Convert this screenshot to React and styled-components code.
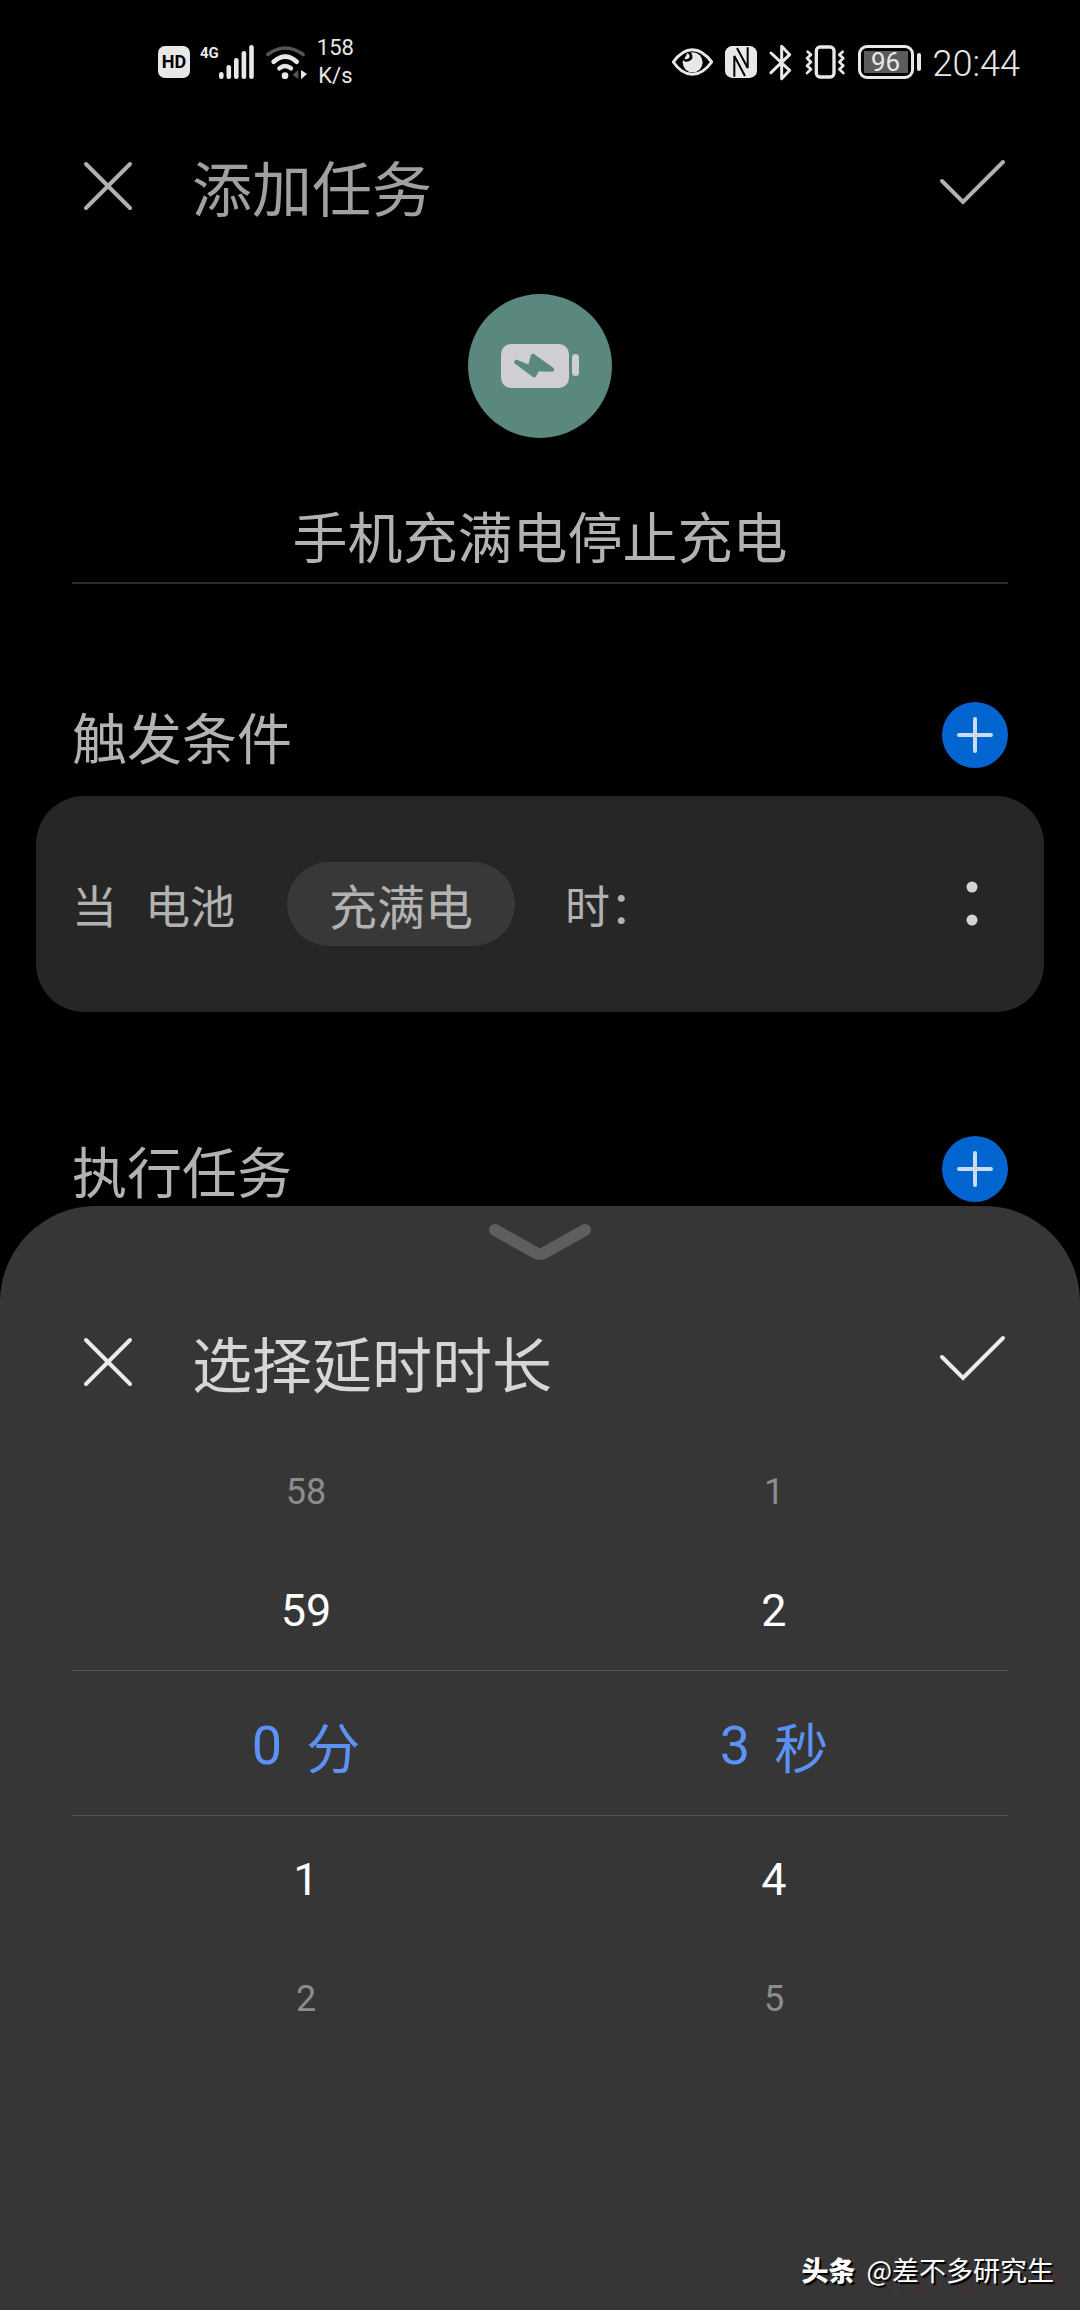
import React, { useState } from "react";
import styled, { createGlobalStyle } from "styled-components";

const GlobalStyle = createGlobalStyle`
  * {
    box-sizing: border-box;
  }

  body {
    margin: 0;
    background-color: #000;
    font-family: Roboto, "Noto Sans CJK SC", sans-serif;
    font-weight: 400;
  }

  button,
  input {
    font: inherit;
    color: inherit;
    border: none;
    background: none;
    padding: 0;
    margin: 0;
  }

  h1,
  h2 {
    margin: 0;
    font-family: "Noto Sans CJK SC", sans-serif;
    font-weight: inherit;
  }
`;

const Page = styled.div`
  min-height: 100vh;
  display: flex;
  flex-direction: column;
  color: #b2b2b2;
`;

/* status bar */

const StatusBar = styled.div`
  height: 124px;
  padding: 0 60px 0 158px;
  display: flex;
  align-items: center;
  justify-content: space-between;
  color: #e8e8e8;
`;

const StatusGroup = styled.div`
  display: flex;
  align-items: center;
  gap: ${({ $gap }) => $gap}px;
`;

const HdBadge = styled.span`
  width: 32px;
  height: 32px;
  border-radius: 7px;
  background-color: #e8e8e8;
  color: #000;
  font-size: 18px;
  font-weight: 700;
  line-height: 32px;
  text-align: center;
`;

const Signal = styled.div`
  display: flex;
  height: 34px;

  span {
    font-size: 15px;
    font-weight: 700;
    line-height: 16px;
  }
`;

const Speed = styled.div`
  font-size: 22px;
  line-height: 28px;
  text-align: center;
`;

const Battery = styled.div`
  display: flex;
  align-items: center;
  gap: 3px;

  &::after {
    content: "";
    width: 4px;
    height: 18px;
    border-radius: 2px;
    background-color: #e8e8e8;
  }
`;

const BatteryBody = styled.div`
  width: 56px;
  height: 34px;
  padding: 3px;
  border: 3px solid #e8e8e8;
  border-radius: 9px;

  span {
    display: block;
    height: 22px;
    background-color: #5c5c5c;
    font-size: 26px;
    line-height: 22px;
    text-align: center;
  }
`;

const Clock = styled.span`
  padding-top: 4px;
  font-size: 36px;
  font-weight: 300;
  line-height: 40px;
`;

/* shared parts */

const TitleBar = styled.header`
  height: 124px;
  padding: 0 72px;
  display: flex;
  align-items: center;
  gap: 48px;
  color: ${({ $bright }) => ($bright ? "#d6d6d6" : "#a0a0a0")};

  h1,
  h2 {
    flex: 1;
    font-size: 60px;
    line-height: 76px;
  }
`;

const IconButton = styled.button`
  width: 72px;
  height: 72px;
  color: ${({ $bright }) => ($bright ? "#ececec" : "#b0b0b0")};
  cursor: pointer;

  svg {
    display: block;
  }
`;

const AddButton = styled.button`
  width: 66px;
  height: 66px;
  border-radius: 50%;
  background-color: #0366d0;
  color: #ccdcee;
  cursor: pointer;

  svg {
    display: block;
  }
`;

/* task form */

const Hero = styled.div`
  padding: 46px 72px 0;
  display: flex;
  flex-direction: column;
  align-items: center;
  gap: 54px;
`;

const TaskIcon = styled.div`
  width: 144px;
  height: 144px;
  border-radius: 50%;
  background-color: #5a887e;
`;

const NameInput = styled.input`
  width: 100%;
  height: 92px;
  padding-bottom: 6px;
  border-bottom: 2px solid #2b2b2b;
  font-size: 55px;
  text-align: center;
  outline: none;
`;

const SectionHead = styled.div`
  height: 66px;
  margin: ${({ $top }) => $top}px 72px 0;
  display: flex;
  align-items: center;
  justify-content: space-between;

  h2 {
    font-size: 55px;
    line-height: 66px;
  }
`;

const ConditionCard = styled.div`
  height: 216px;
  margin: 28px 36px 0;
  padding: 0 36px;
  display: flex;
  align-items: center;
  gap: 28px;
  border-radius: 48px;
  background-color: #262626;
  font-size: 45px;

  ${IconButton} {
    margin-left: auto;
    color: #d4d4d4;
  }
`;

const Pill = styled.button`
  height: 84px;
  margin: 0 22px 0 24px;
  padding: 0 42px;
  border-radius: 42px;
  background-color: #383838;
  font-family: "Noto Sans CJK SC", sans-serif;
  font-size: 48px;
  line-height: 84px;
  cursor: pointer;
`;

/* bottom sheet */

const Sheet = styled.section`
  position: relative;
  flex: 1;
  margin-top: 4px;
  display: flex;
  flex-direction: column;
  border-radius: 96px 96px 0 0;
  background-color: #363636;
`;

const Handle = styled.button`
  height: 94px;
  padding-top: 18px;
  display: flex;
  justify-content: center;
  cursor: pointer;
`;

const Picker = styled.div`
  display: flex;
  padding: 8px 72px 0;
`;

const Wheel = styled.div`
  flex: 1;
  display: flex;
  flex-direction: column;
`;

const WheelItem = styled.button`
  height: 119px;
  color: ${({ $far }) => ($far ? "#8c8c8c" : "#fff")};
  font-size: ${({ $far }) => ($far ? 36 : 45)}px;
  cursor: pointer;
`;

const WheelValue = styled.div`
  height: 146px;
  margin-bottom: 4px;
  padding-top: 4px;
  display: flex;
  align-items: center;
  justify-content: center;
  gap: 24px;
  border: solid #565656;
  border-width: 1px 0;
  color: #5c92f5;
  font-size: 54px;
`;

const Credit = styled.div`
  position: relative;
  margin-top: auto;
  padding: 0 26px 20px;
  display: flex;
  justify-content: flex-end;
  gap: 11px;
  color: #fff;
  font-family: "Noto Sans CJK SC", sans-serif;
  font-size: 27px;
  line-height: 40px;
  text-shadow: 2px 2px 1px #000;

  b {
    font-weight: 900;
  }
`;

const Stamp = styled.svg`
  position: absolute;
  right: 14px;
  bottom: 8px;
`;

const Icon = ({ size = 72, width = 4, children }) => (
  <svg
    width={size}
    height={size}
    viewBox={`0 0 ${size} ${size}`}
    fill="none"
    stroke="currentColor"
    strokeWidth={width}
    strokeLinecap="round"
    aria-hidden="true"
  >
    {children}
  </svg>
);

const CloseIcon = () => (
  <Icon>
    <path d="M14 14 58 58M58 14 14 58" />
  </Icon>
);

const CheckIcon = () => (
  <Icon>
    <path d="M6 31 27 52 67 12" />
  </Icon>
);

const PlusIcon = () => (
  <Icon size={66}>
    <path d="M33 17V49M17 33H49" />
  </Icon>
);

const DotsIcon = () => (
  <Icon>
    <g fill="currentColor" stroke="none">
      <circle cx="36" cy="19" r="5.5" />
      <circle cx="36" cy="52" r="5.5" />
    </g>
  </Icon>
);

const SignalIcon = () => (
  <svg width="36" height="34" viewBox="0 0 36 34" fill="currentColor">
    <rect x="0" y="27" width="4.6" height="7" rx="2.2" />
    <rect x="7.5" y="20" width="4.6" height="14" rx="2.2" />
    <rect x="15" y="13" width="4.6" height="21" rx="2.2" />
    <rect x="22.6" y="6" width="4.6" height="28" rx="2.2" />
    <rect x="30.2" y="0" width="4.6" height="34" rx="2.2" />
  </svg>
);

const WifiIcon = () => (
  <svg width="42" height="36" viewBox="370 69 126 108" fill="none" strokeLinecap="round">
    <path d="M379 100Q431 62 484 100" stroke="#555" strokeWidth="11" />
    <path d="M396 122Q431 92 465 122" stroke="#e8e8e8" strokeWidth="14" />
    <path d="M413 142Q430 128 448 142" stroke="#e8e8e8" strokeWidth="13" />
    <circle cx="430" cy="164" r="10" fill="#e8e8e8" />
    <path d="M453 161 470 147V174Z" fill="#555" />
    <path d="M478 147V175L496 159Z" fill="#e8e8e8" />
  </svg>
);

const EyeIcon = () => (
  <svg width="41" height="28" viewBox="60 83 123 84" fill="none">
    <path
      d="M64 125Q90 88 121 88T179 125Q153 162 121 162T64 125Z"
      stroke="currentColor"
      strokeWidth="9"
      strokeLinejoin="round"
    />
    <circle cx="122" cy="126" r="30" fill="currentColor" />
    <path d="M92 118Q96 98 116 96Q124 106 120 116Q112 126 100 124Z" fill="#000" />
    <path d="M106 98Q116 104 112 112Q106 118 97 116Z" fill="currentColor" />
  </svg>
);

const NfcIcon = () => (
  <svg width="32" height="32" viewBox="0 0 96 96" fill="none">
    <rect width="96" height="96" rx="22" fill="currentColor" />
    <path d="M28 92V30L60 90" stroke="#000" strokeWidth="6" />
    <path d="M68 4V66L36 6" stroke="#000" strokeWidth="6" />
  </svg>
);

const BluetoothIcon = () => (
  <svg
    width="24"
    height="37"
    viewBox="0 0 72 111"
    fill="none"
    stroke="currentColor"
    strokeWidth="9"
    strokeLinejoin="round"
    strokeLinecap="round"
  >
    <path d="M6 27 62 79 38 104V7L62 32 6 86" />
  </svg>
);

const VibrateIcon = () => (
  <svg
    width="41"
    height="34"
    viewBox="0 0 123 102"
    fill="none"
    stroke="currentColor"
    strokeWidth="8"
    strokeLinecap="round"
    strokeLinejoin="round"
  >
    <rect x="34" y="6" width="53" height="90" rx="11" strokeWidth="10" />
    <path d="M8 20 18 29 6 40 18 51 6 62 18 73 6 84" />
    <path d="M113 20 103 29 115 40 103 51 115 62 103 73 115 84" />
  </svg>
);

const ChargeIcon = () => (
  <svg width="144" height="144" viewBox="0 0 144 144" aria-hidden="true">
    <rect x="33" y="50" width="68" height="44" rx="10" fill="#cfcfd1" />
    <rect x="104" y="60" width="7" height="22" rx="3.5" fill="#cfcfd1" />
    <path
      d="M48.500 68 62 73.500 65 62 84 75.500 69.500 75 66 81Z"
      fill="#5a887e"
      stroke="#5a887e"
      strokeWidth="4.500"
      strokeLinejoin="round"
    />
  </svg>
);

const wrap = (n) => (n + 60) % 60;

const NumberWheel = ({ label, unit, value, onChange }) => {
  const item = (offset) => (
    <WheelItem
      key={offset}
      $far={Math.abs(offset) === 2}
      onClick={() => onChange(wrap(value + offset))}
    >
      {wrap(value + offset)}
    </WheelItem>
  );

  return (
    <Wheel role="group" aria-label={label}>
      {[-2, -1].map(item)}
      <WheelValue>
        <span>{value}</span>
        <span>{unit}</span>
      </WheelValue>
      {[1, 2].map(item)}
    </Wheel>
  );
};

const App = () => {
  const [name, setName] = useState("手机充满电停止充电");
  const [minutes, setMinutes] = useState(0);
  const [seconds, setSeconds] = useState(3);

  return (
    <Page lang="zh-CN">
      <GlobalStyle />
      <StatusBar>
        <StatusGroup $gap={10}>
          <HdBadge>HD</HdBadge>
          <Signal>
            <span>4G</span>
            <SignalIcon />
          </Signal>
          <WifiIcon />
          <Speed>
            158
            <br />
            K/s
          </Speed>
        </StatusGroup>
        <StatusGroup $gap={12}>
          <EyeIcon />
          <NfcIcon />
          <BluetoothIcon />
          <VibrateIcon />
          <Battery>
            <BatteryBody>
              <span>96</span>
            </BatteryBody>
          </Battery>
          <Clock>20:44</Clock>
        </StatusGroup>
      </StatusBar>

      <TitleBar>
        <IconButton aria-label="关闭">
          <CloseIcon />
        </IconButton>
        <h1>添加任务</h1>
        <IconButton aria-label="完成">
          <CheckIcon />
        </IconButton>
      </TitleBar>

      <Hero>
        <TaskIcon>
          <ChargeIcon />
        </TaskIcon>
        <NameInput
          aria-label="任务名称"
          value={name}
          onChange={(e) => setName(e.target.value)}
        />
      </Hero>

      <SectionHead $top={118}>
        <h2>触发条件</h2>
        <AddButton aria-label="添加触发条件">
          <PlusIcon />
        </AddButton>
      </SectionHead>
      <ConditionCard>
        <span>当</span>
        <span>电池</span>
        <Pill>充满电</Pill>
        <span>时：</span>
        <IconButton aria-label="更多">
          <DotsIcon />
        </IconButton>
      </ConditionCard>

      <SectionHead $top={124}>
        <h2>执行任务</h2>
        <AddButton aria-label="添加执行任务">
          <PlusIcon />
        </AddButton>
      </SectionHead>

      <Sheet>
        <Handle aria-label="收起">
          <svg width="102" height="38" viewBox="0 0 102 38" fill="none">
            <path
              d="M6 6 47 29Q51 31 55 29L96 6"
              stroke="#5e5e5e"
              strokeWidth="12"
              strokeLinecap="round"
            />
          </svg>
        </Handle>
        <TitleBar $bright>
          <IconButton $bright aria-label="取消">
            <CloseIcon />
          </IconButton>
          <h2>选择延时时长</h2>
          <IconButton $bright aria-label="确定">
            <CheckIcon />
          </IconButton>
        </TitleBar>
        <Picker>
          <NumberWheel label="分钟" unit="分" value={minutes} onChange={setMinutes} />
          <NumberWheel label="秒" unit="秒" value={seconds} onChange={setSeconds} />
        </Picker>
        <Stamp
          width="186"
          height="32"
          viewBox="0 0 186 32"
          fill="none"
          stroke="#5a2c32"
          strokeWidth="2"
          opacity="0.6"
          aria-hidden="true"
        >
          <path d="M4 20 8 8M16 10V26M24 8 34 22M44 8 38 26M50 10 60 24M84 8Q76 16 84 26M98 8 92 24M104 8 112 22M122 8V24M130 10 138 24M164 6H184M172 12 166 22M176 14 182 20" />
        </Stamp>
        <Credit>
          <b>头条</b>
          <span>@差不多研究生</span>
        </Credit>
      </Sheet>
    </Page>
  );
};

export default App;
